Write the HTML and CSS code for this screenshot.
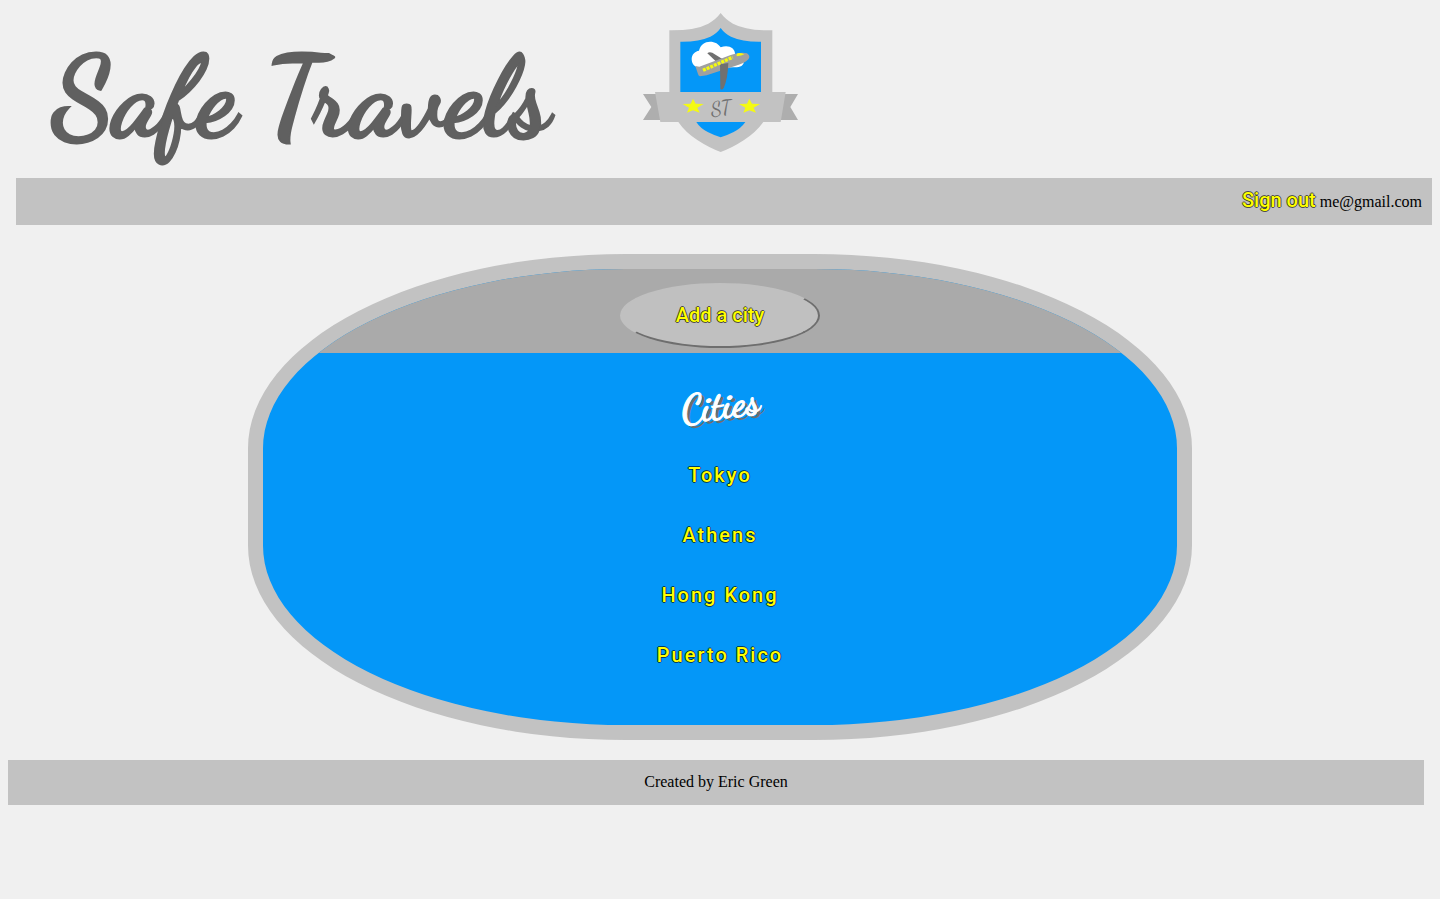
FILE: index.html
```html
<!DOCTYPE html>
<html lang="en">
<head>
<meta charset="utf-8">
<title>Safe Travels</title>
<link rel="stylesheet" href="styles.css">
</head>
<body>
<header class="masthead">
  <h1 class="brand">Safe Travels</h1>
  <svg class="logo" viewBox="36 36 471 423" role="img" aria-label="Safe Travels crest">
    <path fill="#aeaeae" d="M39 282H92V360H39L64 321ZM504 282H452V360H504L481 321Z"/>
    <path fill="#c2c2c2" d="M272 39Q258 58 235 71Q195 92 118 91V366H145Q165 396 203 421Q238 444 272 456Q306 444 341 421Q379 396 400 366H427V91Q349 92 309 71Q286 58 272 39Z"/>
    <path fill="#0497f8" d="M272 84Q260 101 241 110Q206 126 151 125V276H393V125Q338 126 303 110Q284 101 272 84Z"/>
    <path fill="#0497f8" d="M199 366H346Q334 384 311 396Q291 406 272 412Q253 406 233 396Q210 384 199 366Z"/>
    <path fill="#fff" d="M207 152C211 134 225 125 240 125C255 125 266 132 272 142C294 133 315 143 315 161L342 184C341 198 330 203 310 202L210 206C195 202 185 192 185 177C185 163 195 154 207 152Z"/>
    <path fill="#707070" d="M232 160Q237 154 247 158L288 184L270 196Z"/>
    <path fill="#a0a0a0" d="M196 198L208 200L302 165Q336 154 351 160Q363 168 355 178Q344 190 315 198L230 226L210 229Q205 228 204 222Z"/>
    <path fill="#707070" d="M270 193L295 189Q293 239 281 264Q276 272 271 266Z"/>
    <path fill="#f4fa12" d="M320 163Q323 157 335 160L343 163Q335 167 320 169Z"/>
    <path fill="none" stroke="#f4fa12" stroke-width="10" stroke-dasharray="9 3" d="M219 211L308 172"/>
    <path fill="#c2c2c2" d="M75 276H467L452 366H91Z"/>
    <path id="star" fill="#f4fa12" d="M189 296L197 311L221 312L202 323L209 338L189 331L171 338L177 323L158 312L182 311Z"/>
    <use href="#star" x="169"/>
    <text class="logo-letters" x="242" y="344" transform="rotate(-8 272 320)">ST</text>
  </svg>
</header>
<nav class="account">
  <a class="link" href="#">Sign out</a>
  <span>me@gmail.com</span>
</nav>
<main class="panel">
  <div class="toolbar">
    <button class="link add" type="button">Add a city</button>
  </div>
  <h2 class="heading">Cities</h2>
  <ul class="cities">
    <li><a class="link city" href="#">Tokyo</a></li>
    <li><a class="link city" href="#">Athens</a></li>
    <li><a class="link city" href="#">Hong Kong</a></li>
    <li><a class="link city" href="#">Puerto Rico</a></li>
  </ul>
</main>
<footer class="footer">Created by Eric Green</footer>
</body>
</html>
```

FILE: styles.css
```css
* { box-sizing: border-box; }
body {
  margin: 8px;
  background: #f0f0f0;
  color: #000;
  font: 16px/20px "Liberation Serif", "Times New Roman", serif;
}
.masthead {
  display: grid;
  grid-template-columns: 1fr auto 1fr;
  align-items: start;
  min-height: 170px;
  padding-top: 4px;
}
.brand {
  margin: 26px 0 0 44px;
  color: #606060;
  font: 600 111px/120px "Dancing Script", "Liberation Serif", cursive;
  white-space: nowrap;
  -webkit-text-stroke: 3px #606060;
  paint-order: stroke fill;
}
.logo {
  width: 157px;
  height: 141px;
}
.logo-letters {
  fill: #707070;
  font: 60px "Dancing Script", "Liberation Serif", cursive;
}
.account {
  display: flex;
  justify-content: flex-end;
  align-items: baseline;
  gap: 4px;
  margin-left: 8px;
  padding: 10px 10px 13px;
  background: #c2c2c2;
}
.link {
  color: #ff0;
  font: 500 20px/24px Roboto, sans-serif;
  text-decoration: none;
  text-shadow: -1px 0 #0009, 0 1px #0009, 1px 0 #0009, 0 -1px #0009;
}
.panel {
  margin: 29px 240px 20px;
  padding-bottom: 38px;
  overflow: hidden;
  border: 15px solid #c2c2c2;
  border-radius: 40%;
  background: #0497f8;
  text-align: center;
}
.toolbar {
  padding: 14px 0 5px;
  background: #aaa;
  display: flex;
  justify-content: center;
}
.add {
  width: 200px;
  height: 65px;
  padding: 0 0 2px;
  border: 2px solid;
  border-color: #c0c0c0 #6e6e6e #6e6e6e #c0c0c0;
  border-radius: 50%;
  background: #c0c0c0;
}
.heading {
  margin: 28px 0 18px;
  color: #fff;
  font: 600 40px/48px "Dancing Script", "Liberation Serif", cursive;
  text-shadow: 3px 3px #6e6e6e;
  transform: rotate(-8deg);
  -webkit-text-stroke: 1px #fff;
}
.cities {
  margin: 0;
  padding: 0;
  list-style: none;
}
.cities li {
  line-height: 60px;
}
.city {
  letter-spacing: 2px;
}
.footer {
  margin-right: 8px;
  padding: 12px 0 13px;
  background: #c2c2c2;
  text-align: center;
}
```
